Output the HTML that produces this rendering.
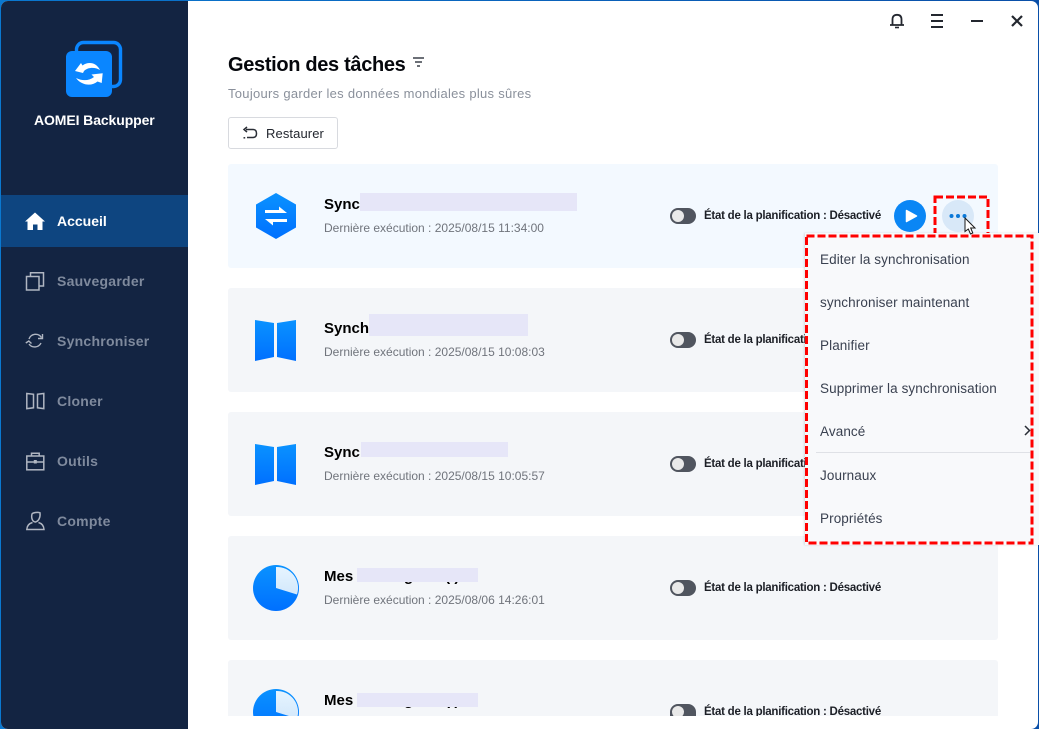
<!DOCTYPE html>
<html><head><meta charset="utf-8"><style>
*{box-sizing:border-box;margin:0;padding:0}
html,body{width:1039px;height:729px;overflow:hidden;background:#0a6cc4}
body{position:relative;font-family:"Liberation Sans","Noto Sans CJK SC",sans-serif}
#win{position:absolute;left:1px;top:1px;width:1037px;height:728px;background:#fff;border-radius:7px;overflow:hidden}
#bg{position:absolute;left:0;top:0;width:1039px;height:729px}
.a{position:absolute;white-space:nowrap}
#side{position:absolute;left:1px;top:1px;width:187px;height:728px;background:#13244280;background:#132442;border-radius:7px 0 0 7px}
.nav{position:absolute;left:57px;font-size:14px;color:#7f8a9d;font-weight:700;line-height:18px;letter-spacing:.25px}
.card{position:absolute;left:228px;width:770px;height:104px;background:#f4f6f9;border-radius:3px}
.name{position:absolute;left:324px;font-size:15px;font-weight:700;color:#000;line-height:20px}
.mask{position:absolute;background:#e6e6f8}
.date{position:absolute;left:324px;font-size:12px;color:#70747c;line-height:16px}
.state{position:absolute;left:704px;font-size:11.5px;font-weight:700;color:#1c1f26;line-height:16px;letter-spacing:-.25px;white-space:nowrap}
.tg{position:absolute;left:670px;width:26px;height:16px;border-radius:8px;background:#50555f}
.tg:after{content:"";position:absolute;left:2px;top:2px;width:12px;height:12px;border-radius:50%;background:#e9e9e9}
.mi{position:absolute;left:820px;font-size:13.5px;color:#3a4150;line-height:18px;letter-spacing:.1px}
</style></head><body>
<div id="bg" style="background:linear-gradient(90deg,#0a78d0,#0a4fa8)"></div>
<div id="win"></div>
<div id="side"></div>

<svg class="a" style="left:60px;top:36px" width="70" height="70" viewBox="0 0 70 70">
<rect x="16.5" y="6.500" width="44" height="44" rx="7" fill="none" stroke="#0a86ff" stroke-width="3.400"/>
<rect x="6" y="15" width="46" height="46" rx="6" fill="#0a86ff"/>
<path d="M15 35 L21 27 L22.500 29.500 C28 25.500 36 26 40 34 C35 31 28 31 24 35 L23 37 Z" fill="#fff"/>
<path d="M42.700 37.300 L41.700 47 L37.500 45.500 C31 51 21 49 16 42 C22 45 29 45 34 41 L31.500 38.500 Z" fill="#fff"/>
</svg>
<div class="a" style="left:34px;top:111px;font-size:14px;font-weight:700;color:#fff;line-height:18px;letter-spacing:-.1px">AOMEI Backupper</div>

<div class="a" style="left:1px;top:195px;width:187px;height:52px;background:#0e4580"></div>
<svg class="a" style="left:24px;top:211px" width="22" height="20" viewBox="0 0 22 20"><path d="M1 10.500 L11 1.500 L21 10.500 L18.500 10.500 V19 H13.500 V13.500 H9 V19 H3.500 V10.500 Z" fill="#fff"/></svg>
<div class="nav" style="top:212px;color:#fff;letter-spacing:0">Accueil</div>

<svg class="a" style="left:23px;top:271px" width="24" height="22" viewBox="0 0 24 22" fill="none" stroke="#b0b6c2" stroke-width="1.500"><rect x="3.500" y="5.500" width="12.500" height="13.500"/><path d="M7.500 5 V1.800 H20.500 V15 H16"/></svg>
<div class="nav" style="top:272px">Sauvegarder</div>

<svg class="a" style="left:24px;top:331px" width="24" height="20" viewBox="0 0 24 20" fill="none" stroke="#b0b6c2" stroke-width="1.400"><path d="M5 8 A7 7 0 0 1 17.500 6.500 M17 12 A7 7 0 0 1 5 13"/><path d="M18.500 3 V7.500 H14 M1.800 12 L4.800 10 L7.500 12.500"/></svg>
<div class="nav" style="top:332px">Synchroniser</div>

<svg class="a" style="left:24px;top:391px" width="24" height="20" viewBox="0 0 24 20" fill="none" stroke="#b0b6c2" stroke-width="1.500"><path d="M2.800 2.500 L9.500 3.300 V16.800 L2.800 17.600 Z M13.500 3.300 L19.800 2.500 V17.600 L13.500 16.800 Z"/></svg>
<div class="nav" style="top:392px">Cloner</div>

<svg class="a" style="left:24px;top:451px" width="24" height="20" viewBox="0 0 24 20" fill="none" stroke="#b0b6c2" stroke-width="1.500"><rect x="2.800" y="5" width="17" height="13.800"/><path d="M7.500 5 V2.200 H15.200 V5 M2.800 11 H19.800"/><rect x="9.800" y="9" width="3" height="3.500" fill="#b0b6c2" stroke="none"/></svg>
<div class="nav" style="top:452px">Outils</div>

<svg class="a" style="left:24px;top:510px" width="24" height="22" viewBox="0 0 24 22" fill="none" stroke="#b0b6c2" stroke-width="1.500"><path d="M8 4 C9 2.500 14 2 16 2.800 C16.500 7 15 11 11.500 12 C8.500 12 7 8 8 4 Z"/><path d="M8.500 12.500 C5 13.500 3 16 2.800 19.500 H20 C19.800 16 18 13.500 14.500 12.500"/></svg>
<div class="nav" style="top:512px">Compte</div>

<svg class="a" style="left:888px;top:12px" width="18" height="18" viewBox="0 0 18 18" fill="none" stroke="#23272f" stroke-width="1.800"><path d="M2 13 H16 M4.500 13 V7.500 C4.500 4.500 6 2.800 9 2.800 C12 2.800 13.500 4.500 13.500 7.500 V13"/><path d="M7 15.500 H11" stroke-width="1.600"/></svg>
<svg class="a" style="left:930px;top:14px" width="14" height="14" viewBox="0 0 14 14" stroke="#23272f" stroke-width="2"><path d="M1 1 H13 M1 7 H13 M1 13 H13"/></svg>
<svg class="a" style="left:970px;top:14px" width="14" height="14" viewBox="0 0 14 14" stroke="#23272f" stroke-width="2"><path d="M1 7 H13"/></svg>
<svg class="a" style="left:1010px;top:14px" width="14" height="14" viewBox="0 0 14 14" stroke="#23272f" stroke-width="2.200"><path d="M2 2 L12 12 M12 2 L2 12"/></svg>

<div class="a" style="left:228px;top:53px;font-size:20px;font-weight:700;color:#05070c;line-height:24px;letter-spacing:-.33px">Gestion des tâches</div>
<svg class="a" style="left:412px;top:56px" width="13" height="12" viewBox="0 0 13 12" stroke="#3b404a" stroke-width="1.600"><path d="M1 2 H12 M3 6 H10 M5 10 H8"/></svg>
<div class="a" style="left:228px;top:85px;font-size:13px;color:#8a909b;line-height:18px;letter-spacing:.285px">Toujours garder les données mondiales plus sûres</div>

<div class="a" style="left:228px;top:117px;width:110px;height:32px;border:1px solid #d8dadf;border-radius:3px;background:#fff"></div>
<svg class="a" style="left:241px;top:125px" width="18" height="16" viewBox="0 0 18 16" fill="none" stroke="#2a2e36" stroke-width="1.500"><path d="M5 4.500 H12 C14.500 4.500 15.500 6.300 15.500 8.500 C15.500 10.800 14.500 12.500 12 12.500 H6"/><path d="M6 2 L3 4.500 L6 7"/><path d="M2.500 12.800 H4.200"/></svg>
<div class="a" style="left:266px;top:125px;font-size:13px;color:#23272f;line-height:18px;letter-spacing:.1px">Restaurer</div>

<div class="card" style="top:164px;background:#f3f9ff"></div>
<div class="card" style="top:288px"></div>
<div class="card" style="top:412px"></div>
<div class="card" style="top:536px"></div>
<div class="card" style="top:660px;height:56px;border-radius:3px 3px 0 0"></div>

<svg class="a" style="left:255px;top:193px" width="42" height="46" viewBox="0 0 42 46"><defs><linearGradient id="g" x1="0" y1="0" x2="0" y2="1"><stop offset="0" stop-color="#0a92ff"/><stop offset="1" stop-color="#0070ff"/></linearGradient></defs><path d="M21 0 L41 11.500 V34.500 L21 46 L1 34.500 V11.500 Z" fill="url(#g)"/><path d="M10 17 H24 V13.500 L32 20 H10 Z M32 26 H10 L18 32.500 V29 H32 Z" fill="#fff"/></svg>
<div class="name" style="top:195px">Sync</div><div class="mask" style="left:360px;top:193px;width:217px;height:18px"></div>
<div class="date" style="top:220px">Dernière exécution : 2025/08/15 11:34:00</div>
<div class="tg" style="top:208px"></div><div class="state" style="top:208px">État de la planification : Désactivé</div>

<svg class="a" style="left:255px;top:320px" width="42" height="41" viewBox="0 0 42 41"><path d="M0 0 L19 3 V37 L0 41 Z M22 3 L41 0 V41 L22 37 Z" fill="url(#g)"/></svg>
<div class="name" style="top:319px">Synch</div><div class="mask" style="left:369px;top:314px;width:159px;height:22px"></div>
<div class="date" style="top:344px">Dernière exécution : 2025/08/15 10:08:03</div>
<div class="tg" style="top:332px"></div><div class="state" style="top:332px">État de la planification : Désactivé</div>

<svg class="a" style="left:255px;top:444px" width="42" height="41" viewBox="0 0 42 41"><path d="M0 0 L19 3 V37 L0 41 Z M22 3 L41 0 V41 L22 37 Z" fill="url(#g)"/></svg>
<div class="name" style="top:443px">Sync</div><div class="mask" style="left:361px;top:442px;width:147px;height:15px"></div>
<div class="date" style="top:468px">Dernière exécution : 2025/08/15 10:05:57</div>
<div class="tg" style="top:456px"></div><div class="state" style="top:456px">État de la planification : Désactivé</div>

<svg class="a" style="left:253px;top:565px" width="46" height="46" viewBox="0 0 46 46"><defs><linearGradient id="w" x1="0" y1="0" x2="0" y2="1"><stop offset="0" stop-color="#e6f4ff"/><stop offset="1" stop-color="#d3e8fb"/></linearGradient></defs><circle cx="23" cy="23" r="23" fill="url(#g)"/><path d="M23 2 A21 21 0 0 1 44 29.500 L23 23 Z" fill="url(#w)"/></svg>
<div class="name" style="top:567px">Mes</div><div class="a" style="left:404px;top:567px;font-size:15px;font-weight:700;line-height:20px;color:#000">g<span style="margin-left:32px">( )</span></div><div class="mask" style="left:357px;top:568px;width:121px;height:14px"></div>
<div class="date" style="top:592px">Dernière exécution : 2025/08/06 14:26:01</div>
<div class="tg" style="top:580px"></div><div class="state" style="top:580px">État de la planification : Désactivé</div>

<div class="a" style="left:253px;top:689px;width:46px;height:27px;overflow:hidden"><svg width="46" height="46" viewBox="0 0 46 46" style="display:block"><circle cx="23" cy="23" r="23" fill="url(#g)"/><path d="M23 2 A21 21 0 0 1 44 29.500 L23 23 Z" fill="url(#w)"/></svg></div>
<div class="name" style="top:691px">Mes</div><div class="a" style="left:404px;top:691px;font-size:15px;font-weight:700;line-height:20px;color:#000">g<span style="margin-left:32px">( )</span></div><div class="mask" style="left:357px;top:693px;width:121px;height:14px"></div>
<div class="tg" style="top:704px;height:12px;border-radius:8px 8px 0 0;overflow:hidden"></div>
<div class="a" style="left:704px;top:704px;height:12px;overflow:hidden"><div style="font-size:11.5px;font-weight:700;color:#1c1f26;line-height:16px;letter-spacing:-.25px">État de la planification : Désactivé</div></div>

<svg class="a" style="left:894px;top:200px" width="32" height="32" viewBox="0 0 32 32"><circle cx="16" cy="16" r="16" fill="#0a86f5"/><path d="M12.500 10.500 L22.500 16 L12.500 21.500 Z" fill="#fff" stroke="#fff" stroke-width="1.500" stroke-linejoin="round"/></svg>
<svg class="a" style="left:942px;top:200px" width="32" height="32" viewBox="0 0 32 32"><circle cx="16" cy="16" r="16" fill="#d8e8f8"/><circle cx="9.500" cy="16" r="2" fill="#0a78d8"/><circle cx="16" cy="16" r="2" fill="#0a78d8"/><circle cx="22.500" cy="16" r="2" fill="#0a78d8"/></svg>

<svg class="a" style="left:933px;top:195px" width="57" height="42" viewBox="0 0 57 42" fill="none"><rect x="2" y="2" width="53" height="38" stroke="#f00" stroke-width="3" stroke-dasharray="8 3"/></svg>

<div class="a" style="left:805px;top:233px;width:234px;height:312px;background:#f8f9fb;box-shadow:-1px 0 2px rgba(0,0,0,.12)"></div>
<svg class="a" style="left:805px;top:233px" width="234" height="313" viewBox="0 0 234 313" fill="none"><rect x="1.500" y="3" width="225.500" height="307" stroke="#f00" stroke-width="3" stroke-dasharray="8 3"/></svg>
<div class="mi" style="top:251px">Editer la synchronisation</div>
<div class="mi" style="top:294px">synchroniser maintenant</div>
<div class="mi" style="top:337px">Planifier</div>
<div class="mi" style="top:380px">Supprimer la synchronisation</div>
<div class="mi" style="top:423px">Avancé</div>
<svg class="a" style="left:1023px;top:425px" width="8" height="11" viewBox="0 0 8 11" fill="none" stroke="#2a2e36" stroke-width="1.500"><path d="M2 1 L6.500 5.500 L2 10"/></svg>
<div class="a" style="left:816px;top:452px;width:214px;height:1px;background:#dfe1e6"></div>
<div class="mi" style="top:467px">Journaux</div>
<div class="mi" style="top:510px">Propriétés</div>

<svg class="a" style="left:964px;top:217px" width="14" height="19" viewBox="0 0 14 19"><path d="M1 1 V14.500 L4.300 12 L6.500 17 L8.800 16 L6.700 11 L11 11 Z" fill="#fff" stroke="#1a1a1a" stroke-width="1"/></svg>
</body></html>
